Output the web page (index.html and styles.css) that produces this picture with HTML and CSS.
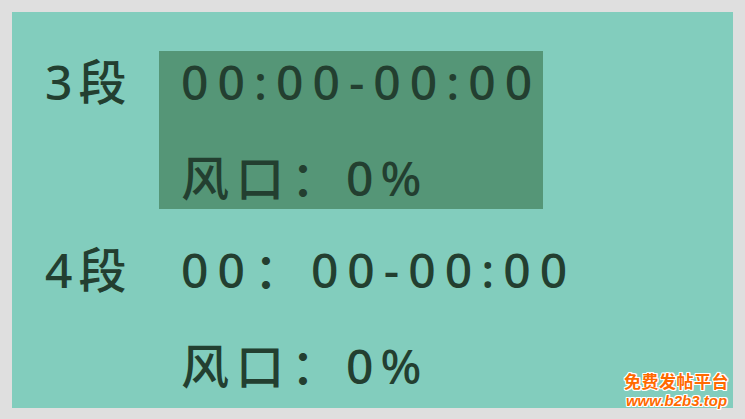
FILE: index.html
```html
<!DOCTYPE html>
<html lang="zh">
<head>
<meta charset="utf-8">
<link rel="stylesheet" href="styles.css">
</head>
<body>
<div class="panel">
  <div class="row">
    <div class="label">3段</div>
    <div class="box selected">
      <div class="line time">00:00-00:00</div>
      <div class="line vent">风口：0%</div>
    </div>
  </div>
  <div class="row second">
    <div class="label">4段</div>
    <div class="box">
      <div class="line time">00：00-00:00</div>
      <div class="line vent">风口：0%</div>
    </div>
  </div>
  <div class="watermark">
    <div class="wm-cn">免费发帖平台</div>
    <div class="wm-url">www.b2b3.top</div>
  </div>
</div>
</body>
</html>
```
FILE: styles.css
```css
html, body {
  margin: 0;
  padding: 0;
}
body {
  background: #dfdfdf;
  width: 745px;
  height: 419px;
  overflow: hidden;
  padding: 12px 12px 11px 12px;
  box-sizing: border-box;
  font-family: "Noto Sans", "Noto Sans CJK SC", sans-serif;
  font-weight: 500;
  color: #233f30;
}
.panel {
  position: relative;
  background: #82cdbd;
  height: 396px;
  padding: 39px 0 0 33px;
  box-sizing: border-box;
  display: flex;
  flex-direction: column;
  gap: 30px;
}
.row {
  display: flex;
  align-items: flex-start;
}
.label {
  width: 114px;
  font-size: 48px;
  line-height: 62px;
  letter-spacing: 6px;
}
.box {
  display: flex;
  flex-direction: column;
  gap: 34px;
  padding: 0 8px 0 22px;
  width: 384px;
  box-sizing: border-box;
}
.box.selected {
  background: #559677;
}
.line {
  font-size: 48px;
  line-height: 62px;
  letter-spacing: 9px;
  white-space: nowrap;
}
.vent {
  letter-spacing: 7px;
}
.watermark {
  position: absolute;
  right: 4px;
  bottom: 0;
  text-align: center;
  color: #ff6a00;
  font-weight: bold;
  line-height: 1;
  text-shadow: -1px -1px 0 #fff, 1px -1px 0 #fff, -1px 1px 0 #fff, 1px 1px 0 #fff, 0 1px 0 #fff, 0 -1px 0 #fff, 1px 0 0 #fff, -1px 0 0 #fff;
}
.wm-cn {
  font-family: "Noto Sans CJK SC", sans-serif;
  font-size: 17px;
  letter-spacing: 0.5px;
}
.wm-url {
  font-family: "Liberation Sans", sans-serif;
  font-style: italic;
  font-size: 15px;
  margin-top: 4px;
}
```
